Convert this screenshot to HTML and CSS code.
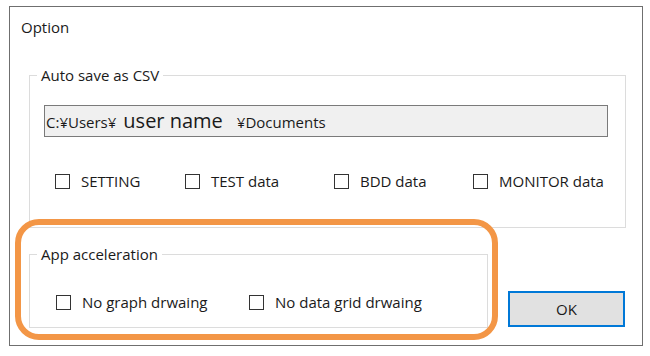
FILE: index.html
```html
<!DOCTYPE html>
<html lang="en">
<head>
<meta charset="utf-8">
<title>Option</title>
<link rel="stylesheet" href="styles.css">
</head>
<body>
<div class="window">
  <div class="title">Option</div>
  <fieldset class="group group-csv">
    <legend>Auto save as CSV</legend>
    <div class="path"><span class="path-sm">C:¥Users¥</span><span class="path-lg">user name</span><span class="path-sm path-tail">¥Documents</span></div>
    <div class="checks checks-csv">
      <label class="check"><span class="box"></span>SETTING</label>
      <label class="check"><span class="box"></span>TEST data</label>
      <label class="check"><span class="box"></span>BDD data</label>
      <label class="check"><span class="box"></span>MONITOR data</label>
    </div>
  </fieldset>
  <div class="bottom">
    <fieldset class="group group-app">
      <legend>App acceleration</legend>
      <div class="checks checks-app">
        <label class="check"><span class="box"></span>No graph drwaing</label>
        <label class="check"><span class="box"></span>No data grid drwaing</label>
      </div>
    </fieldset>
    <button class="ok" type="button">OK</button>
  </div>
  <div class="highlight"></div>
</div>
</body>
</html>
```
FILE: styles.css
```css
body {
  margin: 0;
  background: #ffffff;
  font-family: "Open Sans", "Noto Sans", sans-serif;
  font-size: 15px;
  color: #1a1a1a;
}

.window {
  position: relative;
  box-sizing: border-box;
  width: 634px;
  height: 340px;
  margin: 6px 0 0 9px;
  border: 1px solid #6f6f6f;
  padding: 10px 0 0 0;
  background: #ffffff;
}

.title {
  line-height: 20px;
  padding-left: 11px;
}

.group {
  margin: 0;
  border: 1px solid #dcdcdc;
  min-width: 0;
}

.group legend {
  padding: 0 4px;
  margin-left: 7px;
  line-height: 21px;
}

.group-csv {
  margin: 28px 16px 0 19px;
  padding: 19px 17px 36px 0;
}

.path {
  box-sizing: border-box;
  height: 32px;
  margin-left: 14px;
  border: 1px solid #7a7a7a;
  background: #f0f0f0;
  line-height: 29px;
  padding-left: 1px;
  white-space: nowrap;
}

.path-lg {
  font-size: 20px;
  margin-left: 7px;
}

.path-tail {
  margin-left: 14px;
}

.checks {
  display: grid;
}

.checks-csv {
  grid-template-columns: 130px 149px 139px auto;
  margin: 34px 0 0 25px;
}

.checks-app {
  grid-template-columns: 193px auto;
  margin-left: 26px;
}

.check {
  display: flex;
  align-items: center;
  gap: 11px;
  line-height: 20px;
  white-space: nowrap;
}

.box {
  flex: none;
  box-sizing: border-box;
  width: 15px;
  height: 15px;
  border: 1px solid #333333;
  background: #ffffff;
}

.bottom {
  display: flex;
  align-items: flex-end;
  margin: 16px 0 0 19px;
}

.group-app {
  box-sizing: border-box;
  width: 459px;
  flex: none;
  padding: 27px 10px 15px 0;
}

.ok {
  box-sizing: border-box;
  width: 117px;
  height: 36px;
  margin: 0 0 1px 20px;
  padding: 0;
  border: 2px solid #0078d7;
  background: #e1e1e1;
  font: inherit;
  color: #1a1a1a;
}

.highlight {
  position: absolute;
  left: 5px;
  top: 212px;
  box-sizing: border-box;
  width: 483px;
  height: 121px;
  border: 6px solid #f39646;
  border-radius: 24px;
  pointer-events: none;
}
```
